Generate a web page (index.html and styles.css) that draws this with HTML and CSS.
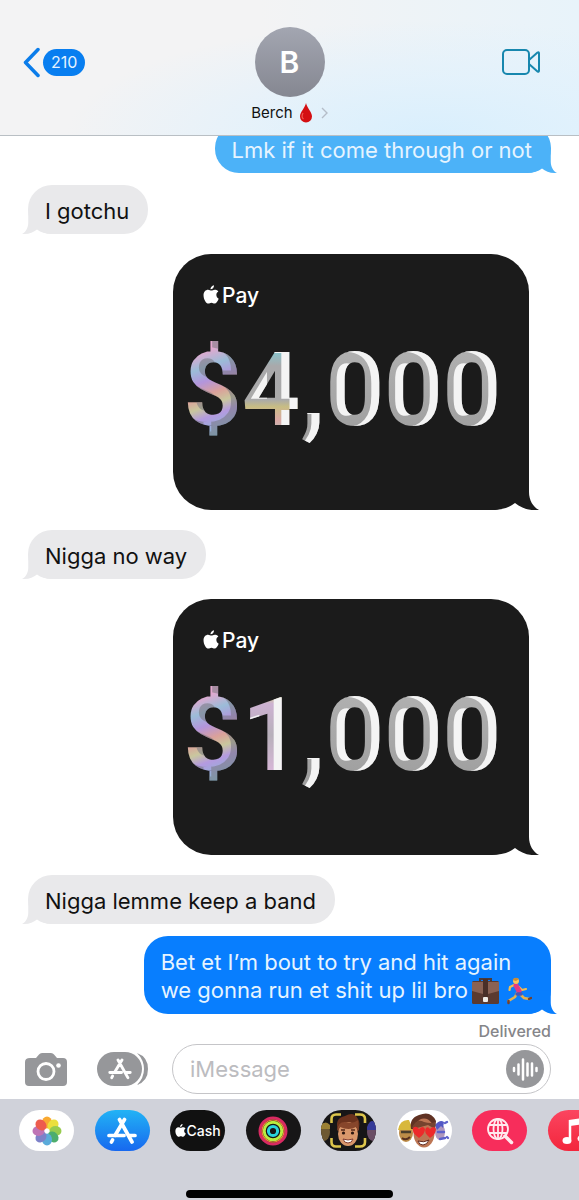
FILE: index.html
```html
<!DOCTYPE html>
<html lang="en">
<head>
<meta charset="utf-8">
<meta name="viewport" content="width=device-width, initial-scale=1">
<title>Berch</title>
<link rel="stylesheet" href="styles.css">
</head>
<body>
<svg class="defs" aria-hidden="true">
  <defs>
    <filter id="bevel" x="-10%" y="-10%" width="120%" height="120%" color-interpolation-filters="sRGB">
      <feOffset in="SourceAlpha" dx="-8" dy="1" result="moved"/>
      <feFlood flood-color="#f4f4f4"/>
      <feComposite in2="SourceAlpha" operator="in"/>
      <feComposite in2="moved" operator="out" result="light"/>
      <feMerge><feMergeNode in="SourceGraphic"/><feMergeNode in="light"/></feMerge>
    </filter>
    <filter id="shade" x="-10%" y="-10%" width="120%" height="120%" color-interpolation-filters="sRGB">
      <feOffset in="SourceAlpha" dx="-6" dy="-4" result="moved"/>
      <feFlood flood-color="#77777f" flood-opacity=".55"/>
      <feComposite in2="SourceAlpha" operator="in"/>
      <feComposite in2="moved" operator="out" result="dark"/>
      <feMerge><feMergeNode in="SourceGraphic"/><feMergeNode in="dark"/></feMerge>
    </filter>
    <symbol id="tail" viewBox="0 0 48 38"><path d="M0 0H38V20C38 28 42 35 48 38C38 39 30 36 24 31C18 36 10 38 0 38Z"/></symbol>
    <symbol id="apple" viewBox="0 0 24 28"><path d="M16.500 0c.3 3.300-2.300 6.300-5.300 6.300C10.900 3.200 13.600.4 16.500 0zM20 14.500c0-3 2.200-4.500 3-5-1.600-2.300-4-2.700-5.200-2.700-2.300 0-3.900 1.300-5.200 1.300-1.300 0-3-1.300-5-1.300C4 6.900.8 9.700.8 15c0 6.500 4 12.600 7.200 12.600 1.700 0 2.600-1.200 4.700-1.200 2 0 2.700 1.200 4.600 1.200 2.600 0 5-3.700 6.200-7.200-2-.8-3.500-3-3.500-5.900z"/></symbol>
    <symbol id="store" viewBox="0 0 30 28"><g fill="none" stroke="currentColor" stroke-width="3.700" stroke-linecap="round"><path d="M17.500 2.500 8 18.500M12.500 2.500 25 25M2 18.500H17M23 18.500H28M5.500 23 4.500 25"/></g></symbol>
  </defs>
</svg>
<div class="phone">
  <header class="top">
    <a class="back" href="#" aria-label="Back, 210 unread">
      <svg width="17" height="31" viewBox="0 0 17 31" aria-hidden="true"><path d="M15 2.500 2.500 15.500 15 28.500" fill="none" stroke="#0a7cea" stroke-width="3.500" stroke-linecap="round" stroke-linejoin="round"/></svg>
      <span class="count">210</span>
    </a>
    <button class="contact" type="button">
      <span class="avatar">B</span>
      <span class="name">Berch
        <svg width="14" height="20" viewBox="0 0 14 20" aria-hidden="true"><path d="M7 0C8 5 13 9 13 13.500A6 6 0 0 1 1 13.500C1 9 6 5 7 0Z" fill="#d40f12"/><path d="M4 10C2.500 13 3 15 4.500 16" fill="none" stroke="#f05a50" stroke-width="1.200"/></svg>
        <svg class="more" width="7" height="12" viewBox="0 0 7 12" aria-hidden="true"><path d="M1 1 6 6 1 11" fill="none" stroke="#b5bdc8" stroke-width="1.400"/></svg>
      </span>
    </button>
    <button class="video" type="button" aria-label="Video call">
      <svg width="38" height="26" viewBox="0 0 38 26" aria-hidden="true"><g fill="none" stroke="#1787ae" stroke-width="2" stroke-linejoin="round"><rect x="1" y="1" width="26" height="24" rx="4"/><path d="M27 11 35.500 3.500Q37 2.500 37 4.500V21.500Q37 23.500 35.500 22.500L27 15"/></g></svg>
    </button>
  </header>

  <main class="thread">
    <p class="bubble sent faded first">Lmk if it come through or not<svg class="tail" aria-hidden="true"><use href="#tail"/></svg></p>
    <p class="bubble got">I gotchu<svg class="tail" aria-hidden="true"><use href="#tail"/></svg></p>
    <section class="card">
      <h2 class="pay"><svg width="16" height="19" aria-hidden="true"><use href="#apple"/></svg>Pay</h2>
      <p class="amount"><span class="foil">$</span><span class="four">4</span><span class="comma">,</span><span class="metal">0</span><span class="metal">0</span><span class="metal">0</span></p>
      <svg class="tail" aria-hidden="true"><use href="#tail"/></svg>
    </section>
    <p class="bubble got">Nigga no way<svg class="tail" aria-hidden="true"><use href="#tail"/></svg></p>
    <section class="card">
      <h2 class="pay"><svg width="16" height="19" aria-hidden="true"><use href="#apple"/></svg>Pay</h2>
      <p class="amount"><span class="foil">$</span><span class="one">1</span><span class="comma">,</span><span class="metal">0</span><span class="metal">0</span><span class="metal">0</span></p>
      <svg class="tail" aria-hidden="true"><use href="#tail"/></svg>
    </section>
    <p class="bubble got">Nigga lemme keep a band<svg class="tail" aria-hidden="true"><use href="#tail"/></svg></p>
    <p class="bubble sent last">Bet et I’m bout to try and hit again<br>we gonna run et shit up lil bro<svg class="emoji" width="29" height="28" viewBox="0 0 29 28" role="img" aria-label="briefcase"><path d="M9 4V2H20V4" fill="none" stroke="#4a3a3a" stroke-width="2"/><rect x="1" y="4" width="27" height="23" rx="1.500" fill="#5b3a30"/><path d="M1 5H28V14L17 17H12L1 14Z" fill="#8a6254"/><rect x="12" y="2" width="5" height="19" fill="#4a2f28"/><rect x="12" y="20" width="5" height="5" rx="1" fill="#f0ebe6"/></svg><svg class="emoji runner" width="25" height="28" viewBox="0 0 25 28" role="img" aria-label="runner"><g fill="none" stroke-linecap="round" stroke-linejoin="round"><path d="M10 16 8 20 1.500 24M12 16 17 21 22 22" stroke="#e5b04e" stroke-width="2.600"/><path d="M7 8 3 10 2.500 13M12 10 15 13 19 12" stroke="#f0bd55" stroke-width="2.200"/><path d="M9 8.500 12 14" stroke="#e23a83" stroke-width="5"/><path d="M10 17 14 17" stroke="#4658b8" stroke-width="3.500"/><path d="M1.500 24V26M22 22 24 21" stroke="#74422f" stroke-width="2.500"/></g><circle cx="9" cy="4" r="3" fill="#f5c55e"/><path d="M5.500 3Q8-1 12 2L9 4Z" fill="#c98b35"/></svg><svg class="tail" aria-hidden="true"><use href="#tail"/></svg></p>
    <p class="status">Delivered</p>
  </main>

  <form class="compose">
    <button type="button" aria-label="Camera"><svg width="42" height="33" viewBox="0 0 42 33" aria-hidden="true"><path d="M5 5H11L14 1.500Q15 0 17 0H26Q28 0 29 1.500L32 5H38Q42 5 42 9V29Q42 33 38 33H4Q0 33 0 29V9Q0 5 5 5Z" fill="#96979a"/><circle cx="21" cy="18.500" r="8" fill="none" stroke="#fff" stroke-width="2.800"/><circle cx="33.500" cy="12.500" r="2.300" fill="#fff"/></svg></button>
    <button class="apps-btn" type="button" aria-label="Apps"><svg width="52" height="34" viewBox="0 0 52 34" aria-hidden="true"><rect width="45" height="34" rx="17" fill="#96979a"/><path d="M40 1Q51 5 51 17T40 33Q47 26 47 17T40 1Z" fill="#96979a"/><svg class="white" x="11" y="6" width="24" height="22"><use href="#store"/></svg></svg></button>
    <div class="field">
      <input type="text" placeholder="iMessage" aria-label="iMessage">
      <button type="button" aria-label="Record audio"><svg width="38" height="38" viewBox="0 0 38 38" aria-hidden="true"><circle cx="19" cy="19" r="19" fill="#96979a"/><path d="M8 18V21M12.500 14.500V24.500M17 9.500V29.500M21.500 13.500V25.500M26 13.500V25.500M30.500 18V21" stroke="#fff" stroke-width="2.500" stroke-linecap="round"/></svg></button>
    </div>
  </form>

  <footer class="drawer">
    <nav class="apps" aria-label="Message apps">
      <button class="app photos" type="button" aria-label="Photos"><svg width="32" height="32" viewBox="-16 -16 32 32" aria-hidden="true"><g opacity=".9"><ellipse cy="-8.500" rx="5" ry="6" fill="#f9a01b"/><ellipse cy="-8.500" rx="5" ry="6" fill="#e9dc27" transform="rotate(45)"/><ellipse cy="-8.500" rx="5" ry="6" fill="#8cc63b" transform="rotate(90)"/><ellipse cy="-8.500" rx="5" ry="6" fill="#3aa55e" transform="rotate(135)"/><ellipse cy="-8.500" rx="5" ry="6" fill="#4aa3d6" transform="rotate(180)"/><ellipse cy="-8.500" rx="5" ry="6" fill="#7074c4" transform="rotate(225)"/><ellipse cy="-8.500" rx="5" ry="6" fill="#b866ae" transform="rotate(270)"/><ellipse cy="-8.500" rx="5" ry="6" fill="#ec4b3b" transform="rotate(315)"/></g></svg></button>
      <button class="app store" type="button" aria-label="App Store"><svg width="30" height="28" aria-hidden="true"><use href="#store"/></svg></button>
      <button class="app cash" type="button"><svg width="11" height="13" aria-hidden="true"><use href="#apple"/></svg>Cash</button>
      <button class="app dark" type="button" aria-label="Fitness"><svg width="30" height="30" viewBox="0 0 30 30" aria-hidden="true"><g fill="none" stroke-width="3"><circle cx="15" cy="15" r="13" stroke="#d92a62"/><circle cx="15" cy="15" r="11" stroke="#f0803c" stroke-width="1.200"/><circle cx="15" cy="15" r="8.800" stroke="#b9ec3f"/><circle cx="15" cy="15" r="4.600" stroke="#29d3dc"/></g></svg></button>
      <button class="app dark" type="button" aria-label="Memoji"><svg width="55" height="41" viewBox="0 0 55 41" aria-hidden="true"><ellipse cx="3" cy="22" rx="6" ry="9" fill="#6d5831"/><path d="M-1 17Q4 9 9 15V19H-1Z" fill="#9b8034"/><ellipse cx="52" cy="22" rx="6" ry="9" fill="#6a4e66"/><path d="M46 17Q50 7 56 14V20H46Z" fill="#353a98"/><path d="M17 21Q13 8 24 6 33 1 37 9 40 13 37 21Z" fill="#6b321d"/><ellipse cx="27" cy="24" rx="10" ry="12" fill="#d9976b"/><path d="M16 21Q17 11 25 12 33 14 37 10L38 21 35 17Q28 21 19 17Z" fill="#87462b"/><circle cx="22.500" cy="23" r="1.600" fill="#2c1610"/><circle cx="31.500" cy="23" r="1.600" fill="#2c1610"/><path d="M20 20H24M30 20H34" stroke="#532719" stroke-width="1.400"/><path d="M22 29Q27 31 32 29 31 33 27 33T22 29Z" fill="#fff" stroke="#813c31"/><path d="M10.500 13V9Q10.500 4.500 15 4.500H20M34 4.500H39Q44 4.500 44 9V13M10.500 28V32Q10.500 36.500 15 36.500H20M34 36.500H39Q44 36.500 44 32V28" fill="none" stroke="#ddc64c" stroke-width="2.600"/></svg></button>
      <button class="app light" type="button" aria-label="Memoji stickers"><svg width="55" height="41" viewBox="0 0 55 41" aria-hidden="true"><ellipse cx="9" cy="23" rx="7" ry="9" fill="#bd8c48"/><path d="M1 20Q3 9 12 10L16 20Z" fill="#d8b83c"/><path d="M4 22H14" stroke="#4b3e2b" stroke-width="2.500"/><path d="M5 28Q9 31 13 27" stroke="#5a3120" stroke-width="2" fill="none"/><ellipse cx="43" cy="22" rx="5" ry="8" fill="#b098bd"/><path d="M38 15Q43 9 47 12L46 18 44 16 40 20Z" fill="#5358c4"/><path d="M41 22H47M43 29 48 28M48 13 50 12M50 27 51 28" stroke="#5f63cb" stroke-width="2.400" stroke-linecap="round"/><path d="M14 19Q12 8 22 5 34 0 39 11L38 21Z" fill="#603223"/><ellipse cx="27" cy="23" rx="10.500" ry="14.500" fill="#bd7654"/><path d="M15 18Q19 8 27 12 34 14 38 12L38 19 31 15 20 18Z" fill="#76432e"/><path d="M22 28Q14 22 16 18 19 15 22 19 26 15 28 19 28 24 22 28ZM33 28Q26 22 29 18 31 16 33 19 37 15 39 19 39 24 33 28Z" fill="#ed2a2b"/><path d="M21 31Q27 33 32 30 30 35 26 35T21 31Z" fill="#fff" stroke="#622c22"/></svg></button>
      <button class="app images" type="button" aria-label="Image search"><svg width="28" height="28" viewBox="0 0 28 28" aria-hidden="true"><g fill="none" stroke="#ffe9ed" stroke-width="1.800"><circle cx="12" cy="12" r="10"/><ellipse cx="12" cy="12" rx="4.500" ry="10"/><path d="M3 8H21M3 16H21M12 2V22"/><path d="M19 19 25.500 25.500" stroke-width="3.500" stroke-linecap="round"/></g></svg></button>
      <button class="app music" type="button" aria-label="Music"><svg width="28" height="28" viewBox="0 0 28 28" aria-hidden="true"><path d="M9 22V4L24 2V20" fill="none" stroke="#fff" stroke-width="2.500"/><path d="M9 4 24 2V7L9 9Z" fill="#fff"/><ellipse cx="6" cy="23.500" rx="4.500" ry="3.500" fill="#fff"/><ellipse cx="21" cy="21.500" rx="4.500" ry="3.500" fill="#fff"/></svg></button>
    </nav>
    <div class="home"></div>
  </footer>
</div>
</body>
</html>
```
FILE: styles.css
```css
* { box-sizing: border-box; }

body {
  margin: 0;
  background: #fff;
  color: #111;
  font-family: Inter, Roboto, "Liberation Sans", sans-serif;
}

button {
  padding: 0;
  border: 0;
  background: none;
  color: inherit;
  font: inherit;
}

p, h2 { margin: 0; }
svg { display: block; flex: none; }
.defs { position: absolute; width: 0; height: 0; }

.phone {
  display: flex;
  flex-direction: column;
  min-height: 100vh;
  overflow: hidden;
}

/* Header */
.top {
  display: grid;
  grid-template-columns: 1fr auto 1fr;
  align-items: start;
  padding: 27px 23px 12px;
  border-bottom: 1px solid #b9bfc4;
  background:
    radial-gradient(ellipse at 75% 100%, #d9effd 0, #dff1fdaa 30%, #e8f3fb00 60%),
    linear-gradient(90deg, #f3f3f4 45%, #e8f3fa);
}

.back {
  display: flex;
  align-items: center;
  gap: 3px;
  margin-top: 20px;
  text-decoration: none;
}

.count {
  padding: 0 8px;
  border-radius: 14px;
  background: #087ef0;
  color: #e4f3ff;
  font-size: 16px;
  line-height: 27px;
}

.contact {
  display: flex;
  flex-direction: column;
  align-items: center;
  gap: 6px;
}

.avatar {
  width: 70px;
  border-radius: 50%;
  background: linear-gradient(#a3a6b1, #858791);
  color: #fff;
  font-size: 30px;
  font-weight: 600;
  line-height: 70px;
}

.name {
  display: flex;
  align-items: center;
  gap: 6px;
  font-size: 15px;
  line-height: 20px;
}

.more { margin-left: 2px; }
.video { justify-self: end; margin: 22px 16px 0 0; }

/* Messages */
.thread {
  display: flex;
  flex: 1;
  flex-direction: column;
  align-items: flex-start;
  gap: 20px;
  padding: 0 28px;
  overflow: hidden;
}

.bubble {
  position: relative;
  isolation: isolate;
  padding: 12px 19px 9px 17px;
  border-radius: 24px;
  font-size: 22px;
  line-height: 28px;
}

.got { background: #e9e9eb; fill: #e9e9eb; }

.sent {
  align-self: flex-end;
  background: #087efe;
  fill: #087efe;
  color: #e6f4ff;
}

.faded { background: #4cb2f8; fill: #4cb2f8; }
.first { margin: -12px 0 -8px; }
.last { margin-top: -8px; }

.tail {
  position: absolute;
  z-index: -1;
  right: -6px;
  bottom: 0;
  width: 30px;
  height: 24px;
}

.got .tail {
  right: auto;
  left: -6px;
  transform: scaleX(-1);
}

.emoji { display: inline-block; vertical-align: middle; margin: -2px 0 0 3px; }
.runner { margin-left: 7px; }

.card {
  position: relative;
  isolation: isolate;
  align-self: flex-end;
  width: 356px;
  max-width: 100%;
  margin-right: 22px;
  padding: 28px 28px 60px;
  border-radius: 38px;
  background: #1b1b1b;
  fill: #1b1b1b;
  color: #fff;
}

.card .tail { right: -10px; width: 48px; height: 38px; }

.pay {
  display: flex;
  align-items: center;
  gap: 3px;
  fill: #fff;
  font-size: 21px;
  font-weight: 500;
  line-height: 28px;
}

.pay svg { margin-bottom: 3px; margin-left: 2px; }

.amount {
  display: flex;
  justify-content: flex-end;
  margin-top: 20px;
  font-family: Roboto, "Liberation Sans", sans-serif;
  font-size: 102px;
  font-weight: 700;
  line-height: 120px;
}

.amount span {
  background-clip: text;
  -webkit-background-clip: text;
  color: transparent;
  filter: url(#bevel);
}

.amount .metal, .amount .comma { background-image: linear-gradient(#b4b4b4, #9c9c9c); }
.amount .foil {
  background-image: linear-gradient(160deg, #e4a8cf 20%, #9bbcd8 32%, #b395dc 42%, #dba19a 52%, #c9c79e 60%, #b49ae0 68%, #88b9d4 82%);
  filter: url(#shade);
}
.amount .four { background-image: linear-gradient(#87c5cd 18%, #a9a9ab 30%, #aaa 58%, #c8bd83 64%, #dba9a4 75%, #bbb 85%); }
.amount .one { background-image: linear-gradient(#d0cb96 18%, #cdb2d2 24%, #b7b0ba 50%, #dcb8dc 85%); }

.status {
  align-self: flex-end;
  margin-top: -14px;
  color: #858589;
  font-size: 16px;
  font-weight: 500;
  line-height: 22px;
}

/* Composer */
.compose {
  display: flex;
  align-items: center;
  padding: 2px 28px 5px 25px;
}

.apps-btn { margin: 0 23px 0 30px; }
.white { color: #fff; }

.field {
  display: flex;
  flex: 1;
  align-items: center;
  min-width: 0;
  padding: 5px 6px 5px 17px;
  border: 1px solid #c5c5c8;
  border-radius: 25px;
}

.field input {
  flex: 1;
  min-width: 0;
  padding: 0;
  border: 0;
  outline: 0;
  background: none;
  font: inherit;
  font-size: 22px;
}

.field input::placeholder { color: #bcbcc0; opacity: 1; }

/* App drawer */
.drawer {
  display: flex;
  flex-direction: column;
  gap: 39px;
  padding: 11px 0 2px 19px;
  background: #d0d2da;
}

.apps {
  display: flex;
  justify-content: space-between;
  margin-right: -24px;
}

.app {
  display: flex;
  flex: none;
  align-items: center;
  justify-content: center;
  width: 55px;
  height: 41px;
  border-radius: 21px;
  overflow: hidden;
  color: #fff;
}

.photos, .light { background: #fff; }
.store { background: linear-gradient(#22b3f5, #1768ef); }
.dark { background: #171617; }
.cash { gap: 1px; background: #111; fill: #fff; font-size: 14px; font-weight: 500; }
.images { background: #f72d5b; }
.music { background: linear-gradient(#fb4560, #f3263c); }

.home {
  align-self: center;
  width: 207px;
  height: 8px;
  margin-right: 19px;
  border-radius: 4px;
  background: #000;
}
```
